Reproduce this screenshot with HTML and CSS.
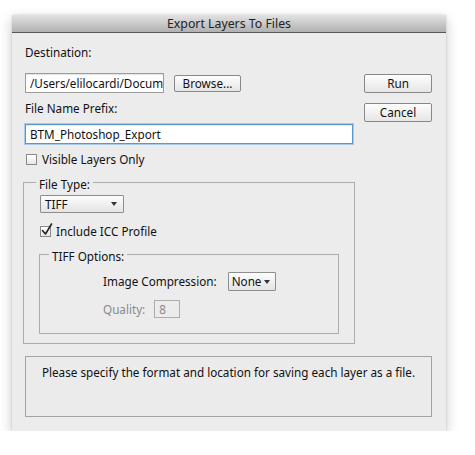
FILE: index.html
```html
<!DOCTYPE html>
<html lang="en">
<head>
  <meta charset="UTF-8">
  <title>Export Layers To Files</title>
  <link rel="stylesheet" href="styles.css">
</head>
<body>
  <div class="dialog">
    <div class="titlebar">Export Layers To Files</div>
    <div class="content">
      <div class="main">
        <div class="form">
          <!-- Destination -->
          <div class="label">Destination:</div>
          <div class="row">
            <div class="field path">/Users/elilocardi/Docum</div>
            <div class="btn browse">Browse...</div>
          </div>

          <!-- Prefix -->
          <div class="label spaced">File Name Prefix:</div>
          <div class="field prefix">BTM_Photoshop_Export</div>

          <div class="check first"><span class="box"></span>Visible Layers Only</div>

          <!-- File type group -->
          <fieldset class="group filetype">
            <legend>File Type:</legend>
            <div class="select tiff">TIFF<span class="arrow"></span></div>
            <div class="check icc">
              <span class="box">
                <svg class="tick" width="12" height="13" viewBox="0 0 12 13"><path d="M1.5 7.5 L4.5 11 L10.5 1" fill="none" stroke="#222" stroke-width="1.6" stroke-linecap="round" stroke-linejoin="round"/></svg>
              </span>Include ICC Profile
            </div>

            <fieldset class="group options">
              <legend>TIFF Options:</legend>
              <div class="opt-row compression">
                <span>Image Compression:</span>
                <div class="select none">None<span class="arrow"></span></div>
              </div>
              <div class="opt-row quality">
                <span>Quality:</span>
                <div class="field small">8</div>
              </div>
            </fieldset>
          </fieldset>
        </div>

        <div class="actions">
          <div class="btn">Run</div>
          <div class="btn">Cancel</div>
        </div>
      </div>

      <div class="message">Please specify the format and location for saving each layer as a file.</div>
    </div>
  </div>
</body>
</html>
```

FILE: styles.css
```css
body {
  margin: 0;
  padding: 0;
  background: #fff;
  font-family: "Noto Sans", "DejaVu Sans", sans-serif;
  font-size: 11.7px;
  line-height: 15px;
  color: #111;
}
.dialog {
  width: 434px;
  margin: 15px 0 0 12px;
  background: #ececec;
  box-shadow: 0 4px 12px rgba(0, 0, 0, 0.22), 0 0 2px rgba(0, 0, 0, 0.15);
}
.titlebar {
  height: 17px;
  line-height: 17px;
  text-align: center;
  font-size: 12.3px;
  color: #222;
  background: linear-gradient(#e2e2e2, #b1b1b1);
  border-bottom: 1px solid #585858;
}
.content {
  padding: 12px 14px 14px 13px;
}
.main {
  display: flex;
  justify-content: space-between;
}
.form {
  width: 328px;
}
.label.spaced {
  margin-top: 8px;
}
.row {
  display: flex;
  align-items: center;
  gap: 10px;
  margin-top: 13px;
}
.field {
  box-sizing: border-box;
  height: 20px;
  line-height: 18px;
  padding: 0 4px;
  background: #fff;
  border: 1px solid #9c9c9c;
  box-shadow: inset 0 1px 1px rgba(0, 0, 0, 0.12);
  white-space: nowrap;
  overflow: hidden;
}
.field.path {
  width: 139px;
  padding: 0 2px 0 4px;
}
.field.prefix {
  margin-top: 8px;
  border-color: #5d97c9;
  box-shadow: 0 0 0 1px #a9cbe8, inset 0 1px 1px rgba(0, 0, 0, 0.1);
}
.field.small {
  width: 26px;
  height: 18px;
  line-height: 16px;
  background: #ececec;
  border-color: #adadad;
  box-shadow: none;
  color: #8a8a8a;
}
.btn {
  box-sizing: border-box;
  height: 19px;
  line-height: 17px;
  text-align: center;
  background: linear-gradient(#fdfdfd, #e6e6e6);
  border: 1px solid #888;
  border-radius: 2px;
  color: #111;
}
.btn.browse {
  width: 67px;
  height: 17px;
  line-height: 15px;
  margin-top: 1px;
}
.actions {
  display: flex;
  flex-direction: column;
  gap: 10px;
  width: 68px;
  margin-top: 29px;
}
.check {
  display: flex;
  align-items: center;
  gap: 5px;
}
.check.first {
  margin-top: 8px;
  padding-left: 1px;
}
.check.icc {
  margin-top: 11px;
}
.box {
  position: relative;
  box-sizing: border-box;
  width: 11px;
  height: 11px;
  background: linear-gradient(#fff, #e8e8e8);
  border: 1px solid #8a8a8a;
}
.tick {
  position: absolute;
  left: 0;
  top: -4px;
}
.group {
  margin: 5px -2px 0 -2px;
  padding: 0 15px 9px 16px;
  border: 1px solid #acacac;
}
.group legend {
  margin-left: -4px;
  padding: 5px 3px 0;
}
.group.options {
  margin: 5px 0 0 -1px;
  padding: 0 0 15px 63px;
}
.group.options legend {
  margin-left: -54px;
}
.select {
  box-sizing: border-box;
  display: flex;
  align-items: center;
  justify-content: space-between;
  height: 18px;
  padding: 0 6px 0 4px;
  background: linear-gradient(#fdfdfd, #e4e4e4);
  border: 1px solid #8e8e8e;
  border-radius: 1px;
}
.select.tiff {
  width: 84px;
  margin-top: 3px;
}
.select.none {
  width: 48px;
  height: 19px;
  padding: 0 5px 0 3px;
}
.arrow {
  width: 0;
  height: 0;
  border-left: 3px solid transparent;
  border-right: 3px solid transparent;
  border-top: 4px solid #333;
}
.opt-row {
  display: flex;
  align-items: center;
  gap: 11px;
}
.opt-row.compression {
  margin-top: 8px;
}
.opt-row.quality {
  margin-top: 9px;
  gap: 9px;
  color: #8a8a8a;
}
.message {
  box-sizing: border-box;
  height: 61px;
  margin-top: 12px;
  padding-top: 8px;
  text-align: center;
  border: 1px solid #a3a3a3;
  background: #ebebeb;
}
```
